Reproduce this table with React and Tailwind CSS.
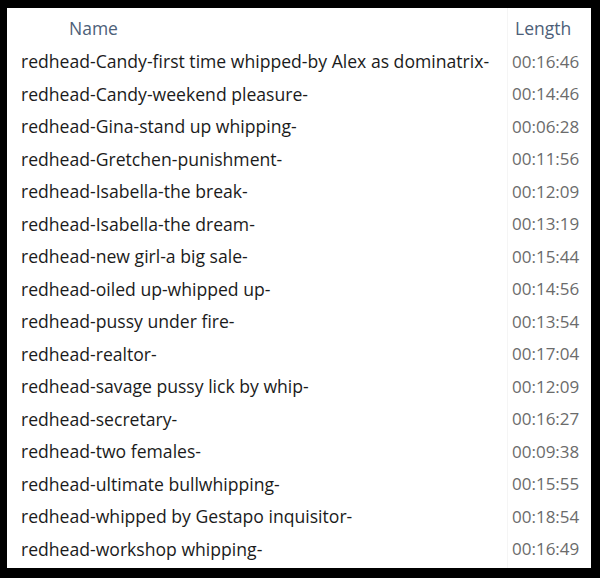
const rows = [
  ['redhead-Candy-first time whipped-by Alex as dominatrix-', '00:16:46'],
  ['redhead-Candy-weekend pleasure-', '00:14:46'],
  ['redhead-Gina-stand up whipping-', '00:06:28'],
  ['redhead-Gretchen-punishment-', '00:11:56'],
  ['redhead-Isabella-the break-', '00:12:09'],
  ['redhead-Isabella-the dream-', '00:13:19'],
  ['redhead-new girl-a big sale-', '00:15:44'],
  ['redhead-oiled up-whipped up-', '00:14:56'],
  ['redhead-pussy under fire-', '00:13:54'],
  ['redhead-realtor-', '00:17:04'],
  ['redhead-savage pussy lick by whip-', '00:12:09'],
  ['redhead-secretary-', '00:16:27'],
  ['redhead-two females-', '00:09:38'],
  ['redhead-ultimate bullwhipping-', '00:15:55'],
  ['redhead-whipped by Gestapo inquisitor-', '00:18:54'],
  ['redhead-workshop whipping-', '00:16:49'],
];

export default function App() {
  return (
    <div className="w-[600px] h-[578px] bg-black pt-[8px] pb-[10px] pl-[7px] pr-[9px]">
      <div className="h-full bg-white flex" style={{ fontFamily: '"Open Sans", sans-serif' }}>
        <div className="flex-1 pl-[14px]">
          <div className="h-[37px] flex items-center pl-[48px] pt-[4px] text-[17.5px] text-[#4d6078]">Name</div>
          {rows.map(([name]) => (
            <div key={name} className="h-[32.5px] flex items-center text-[17.6px] text-[#1b1b1b] whitespace-nowrap">
              {name}
            </div>
          ))}
        </div>
        <div className="w-[84px] border-l border-[#f5f5f5] pl-[4px]">
          <div className="h-[37px] flex items-center pl-[3px] pt-[4px] text-[17.5px] text-[#4d6078]">Length</div>
          {rows.map(([name, len]) => (
            <div key={name} className="h-[32.5px] flex items-center text-[17px] text-[#6b6b6b]">
              {len}
            </div>
          ))}
        </div>
      </div>
    </div>
  );
}
